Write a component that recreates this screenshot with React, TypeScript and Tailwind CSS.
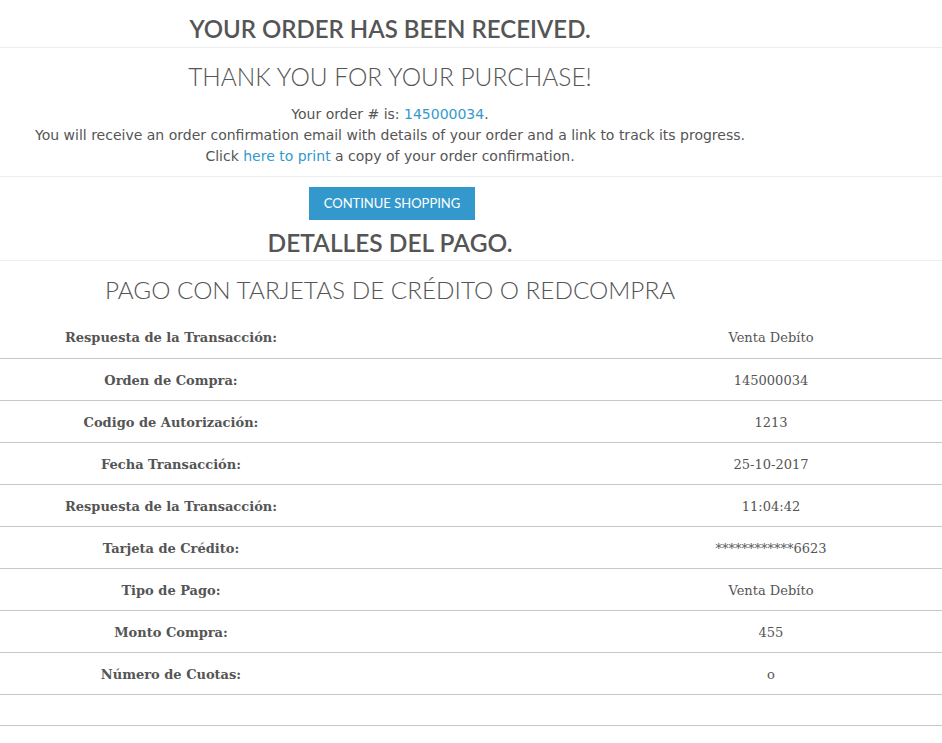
import React from 'react'

type Row = { label: string; value: string }

const rows: Row[] = [
    { label: 'Respuesta de la Transacción:', value: 'Venta Debíto' },
    { label: 'Orden de Compra:', value: '145000034' },
    { label: 'Codigo de Autorización:', value: '1213' },
    { label: 'Fecha Transacción:', value: '25-10-2017' },
    { label: 'Respuesta de la Transacción:', value: '11:04:42' },
    { label: 'Tarjeta de Crédito:', value: '************6623' },
    { label: 'Tipo de Pago:', value: 'Venta Debíto' },
    { label: 'Monto Compra:', value: '455' },
    { label: 'Número de Cuotas:', value: 'o' },
]

const heading = "font-['Lato',sans-serif] text-[#555]"

const App: React.FC = () => {
    return (
        <div className="w-[942px] bg-white text-[#555]">
            {/* order received */}
            <div className="w-[780px] pt-[15px] pb-[4px] text-center">
                <h1 className={`${heading} text-[24px] font-semibold leading-[28px]`}>
                    YOUR ORDER HAS BEEN RECEIVED.
                </h1>
            </div>
            <div className="border-t border-[#eeeeee]"></div>

            <div className="w-[780px] pt-[15px] pb-[9px] text-center">
                <h2 className={`${heading} text-[24.5px] font-light leading-[28px] mb-[13px]`}>
                    THANK YOU FOR YOUR PURCHASE!
                </h2>
                <div className="font-['DejaVu_Sans',sans-serif] text-[14px] leading-[21px]">
                    <p>
                        Your order # is: <a className="text-[#3399cc]">145000034</a>.
                    </p>
                    <p>You will receive an order confirmation email with details of your order and a link to track its progress.</p>
                    <p>
                        Click <a className="text-[#3399cc]">here to print</a> a copy of your order confirmation.
                    </p>
                </div>
            </div>
            <div className="border-t border-[#eeeeee]"></div>

            <div className="w-[780px] pt-[10px] flex flex-col items-center">
                <button className="ml-[4px] h-[33px] w-[166px] bg-[#3399cc] text-white font-['Lato',sans-serif] text-[13px]">
                    CONTINUE SHOPPING
                </button>
                <h2 className={`${heading} text-[24.5px] font-semibold leading-[28px] mt-[9px] mb-[3px]`}>
                    DETALLES DEL PAGO.
                </h2>
            </div>
            <div className="border-t border-[#eeeeee]"></div>

            <div className="w-[780px] pt-[15px] pb-[12px] text-center">
                <h3 className={`${heading} text-[24.3px] font-light leading-[28px]`}>
                    PAGO CON TARJETAS DE CRÉDITO O REDCOMPRA
                </h3>
            </div>

            {/* payment table */}
            <div className="font-['DejaVu_Serif',serif] text-[13px] text-[#555]">
                {rows.map((row, i) => (
                    <div
                        key={i}
                        className={`grid grid-cols-[342px_1fr_342px] h-[42px] pt-[2px] items-center ${i === 0 ? '' : 'border-t border-[#c8c8c8]'}`}
                    >
                        <div className="text-center font-bold">{row.label}</div>
                        <div></div>
                        <div className="text-center">{row.value}</div>
                    </div>
                ))}
                <div className="h-[32px] border-t border-b border-[#c8c8c8]"></div>
            </div>
        </div>
    )
}

export default App
